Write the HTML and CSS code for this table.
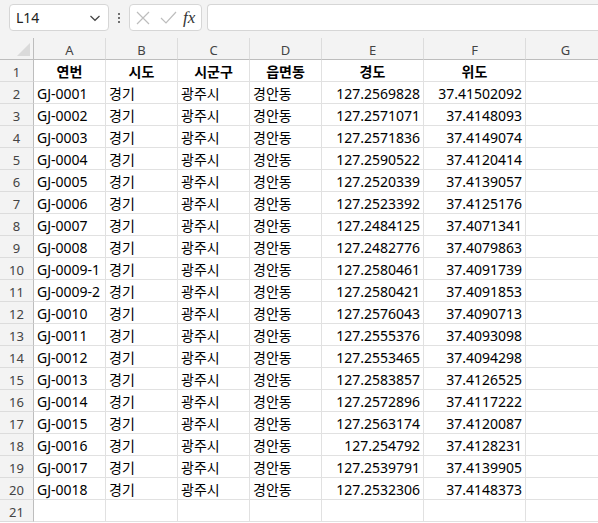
FILE: index.html
```html
<!DOCTYPE html>
<html lang="ko">
<head>
<meta charset="utf-8">
<link rel="stylesheet" href="styles.css">
</head>
<body>
<div class="toolbar">
  <div class="namebox">
    <span class="name">L14</span>
    <svg class="chev" width="12" height="8" viewBox="0 0 12 8"><path d="M1.5 2 L6 6.3 L10.5 2" fill="none" stroke="#444" stroke-width="1.2"/></svg>
  </div>
  <div class="vdots"><span></span><span></span><span></span></div>
  <div class="fxbox">
    <svg class="ic" width="18" height="18" viewBox="0 0 18 18"><path d="M3 3 L15 15 M15 3 L3 15" stroke="#bdbdbd" stroke-width="1.2" fill="none"/></svg>
    <svg class="ic" width="18" height="18" viewBox="0 0 18 18"><path d="M2 9 L7 14 L17 3" stroke="#bdbdbd" stroke-width="1.2" fill="none"/></svg>
    <span class="fx">fx</span>
  </div>
  <div class="formula"></div>
</div>
<div class="sheet">
  <div class="corner"><span class="tri"></span></div>
  <div class="ch">A</div><div class="ch">B</div><div class="ch">C</div><div class="ch">D</div><div class="ch">E</div><div class="ch">F</div><div class="ch">G</div>

  <div class="rh">1</div><div class="c b ctr">연번</div><div class="c b ctr">시도</div><div class="c b ctr">시군구</div><div class="c b ctr">읍면동</div><div class="c b ctr">경도</div><div class="c b ctr">위도</div><div class="c"></div>
  <div class="rh">2</div><div class="c">GJ-0001</div><div class="c">경기</div><div class="c">광주시</div><div class="c">경안동</div><div class="c r">127.2569828</div><div class="c r">37.41502092</div><div class="c"></div>
  <div class="rh">3</div><div class="c">GJ-0002</div><div class="c">경기</div><div class="c">광주시</div><div class="c">경안동</div><div class="c r">127.2571071</div><div class="c r">37.4148093</div><div class="c"></div>
  <div class="rh">4</div><div class="c">GJ-0003</div><div class="c">경기</div><div class="c">광주시</div><div class="c">경안동</div><div class="c r">127.2571836</div><div class="c r">37.4149074</div><div class="c"></div>
  <div class="rh">5</div><div class="c">GJ-0004</div><div class="c">경기</div><div class="c">광주시</div><div class="c">경안동</div><div class="c r">127.2590522</div><div class="c r">37.4120414</div><div class="c"></div>
  <div class="rh">6</div><div class="c">GJ-0005</div><div class="c">경기</div><div class="c">광주시</div><div class="c">경안동</div><div class="c r">127.2520339</div><div class="c r">37.4139057</div><div class="c"></div>
  <div class="rh">7</div><div class="c">GJ-0006</div><div class="c">경기</div><div class="c">광주시</div><div class="c">경안동</div><div class="c r">127.2523392</div><div class="c r">37.4125176</div><div class="c"></div>
  <div class="rh">8</div><div class="c">GJ-0007</div><div class="c">경기</div><div class="c">광주시</div><div class="c">경안동</div><div class="c r">127.2484125</div><div class="c r">37.4071341</div><div class="c"></div>
  <div class="rh">9</div><div class="c">GJ-0008</div><div class="c">경기</div><div class="c">광주시</div><div class="c">경안동</div><div class="c r">127.2482776</div><div class="c r">37.4079863</div><div class="c"></div>
  <div class="rh">10</div><div class="c">GJ-0009-1</div><div class="c">경기</div><div class="c">광주시</div><div class="c">경안동</div><div class="c r">127.2580461</div><div class="c r">37.4091739</div><div class="c"></div>
  <div class="rh">11</div><div class="c">GJ-0009-2</div><div class="c">경기</div><div class="c">광주시</div><div class="c">경안동</div><div class="c r">127.2580421</div><div class="c r">37.4091853</div><div class="c"></div>
  <div class="rh">12</div><div class="c">GJ-0010</div><div class="c">경기</div><div class="c">광주시</div><div class="c">경안동</div><div class="c r">127.2576043</div><div class="c r">37.4090713</div><div class="c"></div>
  <div class="rh">13</div><div class="c">GJ-0011</div><div class="c">경기</div><div class="c">광주시</div><div class="c">경안동</div><div class="c r">127.2555376</div><div class="c r">37.4093098</div><div class="c"></div>
  <div class="rh">14</div><div class="c">GJ-0012</div><div class="c">경기</div><div class="c">광주시</div><div class="c">경안동</div><div class="c r">127.2553465</div><div class="c r">37.4094298</div><div class="c"></div>
  <div class="rh">15</div><div class="c">GJ-0013</div><div class="c">경기</div><div class="c">광주시</div><div class="c">경안동</div><div class="c r">127.2583857</div><div class="c r">37.4126525</div><div class="c"></div>
  <div class="rh">16</div><div class="c">GJ-0014</div><div class="c">경기</div><div class="c">광주시</div><div class="c">경안동</div><div class="c r">127.2572896</div><div class="c r">37.4117222</div><div class="c"></div>
  <div class="rh">17</div><div class="c">GJ-0015</div><div class="c">경기</div><div class="c">광주시</div><div class="c">경안동</div><div class="c r">127.2563174</div><div class="c r">37.4120087</div><div class="c"></div>
  <div class="rh">18</div><div class="c">GJ-0016</div><div class="c">경기</div><div class="c">광주시</div><div class="c">경안동</div><div class="c r">127.254792</div><div class="c r">37.4128231</div><div class="c"></div>
  <div class="rh">19</div><div class="c">GJ-0017</div><div class="c">경기</div><div class="c">광주시</div><div class="c">경안동</div><div class="c r">127.2539791</div><div class="c r">37.4139905</div><div class="c"></div>
  <div class="rh">20</div><div class="c">GJ-0018</div><div class="c">경기</div><div class="c">광주시</div><div class="c">경안동</div><div class="c r">127.2532306</div><div class="c r">37.4148373</div><div class="c"></div>
  <div class="rh">21</div><div class="c"></div><div class="c"></div><div class="c"></div><div class="c"></div><div class="c"></div><div class="c"></div><div class="c"></div>
</div>
</body>
</html>
```
FILE: styles.css
```css
html, body { margin: 0; padding: 0; }
body {
  width: 598px;
  height: 523px;
  overflow: hidden;
  background: #ffffff;
  font-family: "Noto Sans", "Noto Sans CJK KR", sans-serif;
}
.toolbar {
  height: 38px;
  background: #f3f3f3;
  display: flex;
  align-items: flex-start;
  padding-top: 4px;
  box-sizing: border-box;
}
.namebox {
  margin-left: 9px;
  width: 100px;
  height: 27px;
  box-sizing: border-box;
  border: 1px solid #d6d6d6;
  border-radius: 4px;
  background: #fff;
  display: flex;
  align-items: center;
  padding-left: 6px;
  padding-right: 7px;
}
.name { font-size: 14px; color: #222; flex: 1; }
.chev { display: block; }
.vdots {
  width: 20px;
  height: 27px;
  display: flex;
  flex-direction: column;
  align-items: center;
  justify-content: center;
  gap: 2px;
}
.vdots span { width: 2px; height: 2px; background: #444; border-radius: 1px; }
.fxbox {
  width: 73px;
  height: 27px;
  box-sizing: border-box;
  border: 1px solid #d6d6d6;
  border-radius: 4px;
  background: #fff;
  display: flex;
  align-items: center;
  padding-left: 4px;
  gap: 7px;
}
.ic { display: block; }
.fx {
  font-family: "Liberation Serif", serif;
  font-style: italic;
  font-size: 17px;
  color: #333;
  margin-left: -1px;
}
.formula {
  margin-left: 5px;
  flex: 1;
  height: 27px;
  box-sizing: border-box;
  border: 1px solid #d6d6d6;
  border-right: none;
  border-radius: 4px 0 0 4px;
  background: #fff;
}
.sheet {
  display: grid;
  grid-template-columns: 34px 72px 72px 72px 72px 102px 102px 80px;
  grid-auto-rows: 22px;
}
.corner {
  background: #f3f3f3;
  border-right: 1px solid #bdbdbd;
  border-bottom: 1px solid #bdbdbd;
  box-sizing: border-box;
  position: relative;
}
.tri {
  position: absolute;
  right: 3px;
  bottom: 3px;
  width: 0; height: 0;
  border-left: 13px solid transparent;
  border-bottom: 13px solid #dadada;
}
.ch {
  background: #f3f3f3;
  border-right: 1px solid #dcdcdc;
  border-bottom: 1px solid #bdbdbd;
  box-sizing: border-box;
  font-size: 13px;
  color: #444;
  display: flex;
  align-items: center;
  justify-content: center;
  padding-top: 2px;
}
.rh {
  background: #f3f3f3;
  border-right: 1px solid #bdbdbd;
  border-bottom: 1px solid #dcdcdc;
  box-sizing: border-box;
  font-size: 13px;
  color: #444;
  display: flex;
  align-items: center;
  justify-content: center;
  padding-top: 2px;
}
.c {
  border-right: 1px solid #e1e1e1;
  border-bottom: 1px solid #e1e1e1;
  box-sizing: border-box;
  font-size: 14px;
  color: #000;
  padding: 1px 3px 0 3px;
  white-space: nowrap;
  display: flex;
  align-items: center;
  overflow: visible;
}
.c.r { justify-content: flex-end; }
.c.ctr { justify-content: center; }
.c.b { font-weight: bold; font-family: "Noto Sans CJK KR", sans-serif; }
```
